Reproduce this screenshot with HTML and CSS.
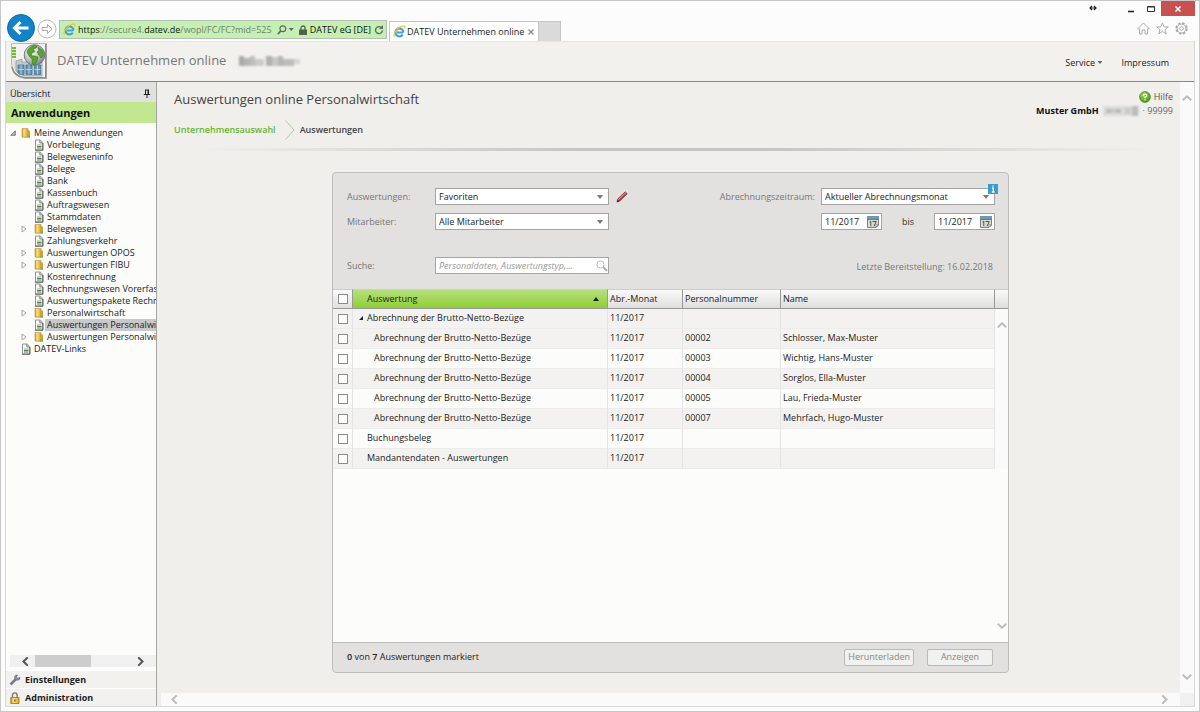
FILE: index.html
```html
<!DOCTYPE html>
<html lang="de">
<head>
<meta charset="utf-8">
<title>DATEV Unternehmen online</title>
<link rel="stylesheet" href="styles.css">
</head>
<body>
<svg class="defs" aria-hidden="true">
  <defs>
    <linearGradient id="gold" x1="0" x2="1"><stop offset="0" stop-color="#b98f22"/><stop offset=".3" stop-color="#fbe083"/><stop offset="1" stop-color="#d9a52a"/></linearGradient>
    <radialGradient id="globe" cx=".35" cy=".3" r=".8"><stop offset="0" stop-color="#ffffff"/><stop offset=".6" stop-color="#b9bdc0"/><stop offset="1" stop-color="#6c7276"/></radialGradient>
    <radialGradient id="green" cx=".4" cy=".3" r=".8"><stop offset="0" stop-color="#a9e04e"/><stop offset="1" stop-color="#3e8a12"/></radialGradient>
    <symbol id="doc" viewBox="0 0 10 12">
      <path d="M1.500 1h4.800L8.500 3.500V11h-7z" fill="#fafafa" stroke="#8e9294"/>
      <path d="M5.800 1v3h3" fill="#cfcfcf" stroke="#77797b" stroke-width=".8"/>
      <path d="M3 6h4.500" stroke="#9aa396"/><path d="M3 7.500h4.500M3 9h4.500" stroke="#55803f" stroke-width="1.200"/>
      <path d="M1 11.200h8V4" fill="none" stroke="#5d6264"/>
    </symbol>
    <symbol id="folder" viewBox="0 0 10 12">
      <path d="M1 1.500h6V10H1z" fill="url(#gold)" stroke="#b8933a" stroke-width=".6"/>
      <path d="M6.500 2.500L9 4v6.500H3L1 10h5.500z" fill="#cda33a"/>
      <path d="M6.500 8.500H9v2H6.500z" fill="#8fa83c"/>
    </symbol>
    <symbol id="ie" viewBox="0 0 12 12">
      <path d="M9.500 6.900H3.600M9.600 7A3.700 3.700 0 1 0 9 8.900" fill="none" stroke="#3fa3de" stroke-width="2"/>
      <path d="M1.400 10.900C-.8 9 4.500 1.600 9.300.9c1.700-.2 2 .8 1.300 2.300" fill="none" stroke="#f0bf2d" stroke-width="1.100"/>
    </symbol>
    <symbol id="cal" viewBox="0 0 12 12">
      <path d="M.5.5h11v8.500l-2.500 2.500H.5z" fill="#d9dcd0" stroke="#7d827f"/>
      <path d="M0 0h12v3.500H0z" fill="#6f98b8"/><path d="M0 3h12v1H0z" fill="#5a7d98"/>
      <path d="M2.500 6l1.300-.8v5M5.500 5.500h3.800L7 10.200" fill="none" stroke="#50554f" stroke-width="1"/>
      <path d="M8.800 11.300V8.800h2.500z" fill="#fff" stroke="#666" stroke-width=".6"/>
    </symbol>
    <symbol id="left" viewBox="0 0 8 8"><path d="M6 .3L2.200 4 6 7.700" fill="none" stroke="currentColor" stroke-width="1.800"/></symbol>
    <symbol id="right" viewBox="0 0 8 8"><path d="M2 .3L5.800 4 2 7.700" fill="none" stroke="currentColor" stroke-width="1.800"/></symbol>
    <symbol id="up" viewBox="0 0 10 8"><path d="M.8 6.200L5 2.200l4.200 4" fill="none" stroke="currentColor" stroke-width="1.900"/></symbol>
    <symbol id="down" viewBox="0 0 10 8"><path d="M.8 1.800L5 5.800l4.200-4" fill="none" stroke="currentColor" stroke-width="1.900"/></symbol>
    <symbol id="closed" viewBox="0 0 6 8"><path d="M1 1l4 3-4 3z" fill="#fff" stroke="#999" stroke-width=".9"/></symbol>
    <symbol id="open" viewBox="0 0 6 6"><path d="M5.300.8v4.500H.8z" fill="#bbb" stroke="#666" stroke-width=".8"/></symbol>
  </defs>
</svg>

<div class="window">
  <header class="chrome">
    <nav class="navbar" aria-label="Browser">
      <button class="back" aria-label="Zurück"><svg viewBox="0 0 28 28"><circle cx="14" cy="14" r="13.500" fill="#1183c6" stroke="#0c6ca6"/><path d="M21.500 14H8M13.500 8L7.500 14l6 6" fill="none" stroke="#fff" stroke-width="3"/></svg></button>
      <button class="forward" aria-label="Vorwärts"><svg viewBox="0 0 20 20"><circle cx="10" cy="10" r="9" fill="#fff" stroke="#b9b9b9"/><path d="M5 8.500h5.500V5.500L15 10l-4.500 4.500v-3H5z" fill="#fff" stroke="#aaa"/></svg></button>
      <div class="address">
        <svg class="ie"><use href="#ie"/></svg>
        <span class="url"><b>https</b>://secure4.<b>datev.de</b>/wopl/FC/FC?mid=525</span>
        <svg class="icon10" viewBox="0 0 12 12"><circle cx="7" cy="4.500" r="3.500" fill="none" stroke="#5d6b58" stroke-width="1.400"/><path d="M4.500 7L1 11" stroke="#5d6b58" stroke-width="2"/></svg>
        <span class="caret"></span>
        <svg class="lock" viewBox="0 0 8 10"><path d="M2 5V3a2 2 0 0 1 4 0v2" fill="none" stroke="#52624d" stroke-width="1.300"/><path d="M0 4.500h8V10H0z" fill="#52624d"/></svg>
        <span class="owner">DATEV eG [DE]</span>
        <svg class="icon10" viewBox="0 0 12 12"><path d="M8.800 3A4.200 4.200 0 1 0 10.200 6.500" fill="none" stroke="#5d6b58" stroke-width="1.600"/><path d="M6 4.800h4.800V0z" fill="#5d6b58"/></svg>
      </div>
      <div class="tab"><svg class="ie"><use href="#ie"/></svg><span>DATEV Unternehmen online</span><button aria-label="Tab schließen"><svg viewBox="0 0 6 6"><path d="M.5.5l5 5m0-5l-5 5" stroke="#888" stroke-width="1.200"/></svg></button></div>
      <button class="newtab" aria-label="Neuer Tab"></button>
    </nav>
    <div class="system">
      <div class="controls">
        <svg class="resize" viewBox="0 0 8 6"><path d="M1 3h6M3 1L1 3l2 2M5 1l2 2-2 2" fill="none" stroke="#222" stroke-width="1.200"/></svg>
        <button aria-label="Minimieren"><svg viewBox="0 0 8 8"><path d="M1 6.500h6" stroke="#222" stroke-width="1.600"/></svg></button>
        <button aria-label="Maximieren"><svg viewBox="0 0 8 8"><path d="M.5 1.500h7v5h-7zM.5 2h7" fill="none" stroke="#333"/></svg></button>
        <button class="close" aria-label="Schließen"><svg viewBox="0 0 8 8"><path d="M1.500 1.500l5 5m0-5l-5 5" stroke="#fff" stroke-width="1.500"/></svg></button>
      </div>
      <div class="tools">
        <button aria-label="Startseite"><svg viewBox="0 0 13 13"><path d="M.8 6.800L6.500 1l5.700 5.800H10.500v5.200H8V8H5v4H2.500V6.800z" fill="#fff" stroke="#aaa"/></svg></button>
        <button aria-label="Favoriten"><svg viewBox="0 0 13 13"><path d="M6.500.9l1.600 4H12.300L9 7.600l1.200 4.300-3.700-2.500-3.700 2.500L4 7.600.7 4.900h4.200z" fill="#fff" stroke="#aaa"/></svg></button>
        <button aria-label="Extras"><svg viewBox="0 0 13 13"><circle cx="6.500" cy="6.500" r="5.400" fill="none" stroke="#aaa" stroke-width="1.600" stroke-dasharray="2.600 1.640"/><circle cx="6.500" cy="6.500" r="4.400" fill="#fff" stroke="#aaa"/><circle cx="6.500" cy="6.500" r="1.800" fill="#fff" stroke="#aaa"/></svg></button>
      </div>
    </div>
  </header>

  <div class="viewport">
    <header class="apphead">
      <svg class="logo" viewBox="0 0 36 36">
        <path d="M.5.500h35v35H14Q1 34 .5 20z" fill="#f1f2f1" stroke="#b5b7b5"/>
        <path d="M34.800 1v33.800H14Q3 33.500 1 24" fill="none" stroke="#8b8e8b" stroke-width="1.600"/>
        <path d="M1 4h4v11H1z" fill="#78b83e"/><path d="M1 6.500h4M1 9.500h4M1 12.500h4" stroke="#d4edbc"/>
        <path d="M1.500 16h3.500v12q-3-4-3.500-8z" fill="#dfe1e1"/>
        <path d="M5 18l6-2v3h20v14H14Q8 32 5 28z" fill="#c4c9cb" stroke="#8c9295" stroke-width=".7"/>
        <path d="M7 22h6v9.500H9L7 30zM15 22h6v9.500h-6zM23.500 22h6v9.500h-6z" fill="#5c97c2" stroke="#47677f" stroke-width=".7"/>
        <path d="M7 26.500h6M15 26.500h6M23.500 26.500h6M10 22v9.500M18 22v9.500M26.500 22v9.500" stroke="#c7ddeb" stroke-width=".8"/>
        <circle cx="23.500" cy="12" r="10.300" fill="url(#globe)" stroke="#73797b"/>
        <path d="M16 9q1-5 7-6.500l3.500.5-1.500 2-3 1.500 2 2-3 1.500-1 2.500 3 .5 4 1-1 4-2.500 4-2-1-.5-5-3-3zM27 4l4 3 1.500 5-2.500 3-2-3-2-3 2-1z" fill="#55a62a" stroke="#317812" stroke-width=".6"/>
      </svg>
      <span class="appname">DATEV Unternehmen online</span>
      <svg class="mosaic-name" viewBox="0 0 62 12" aria-hidden="true"><path d="M0 1h5v10H0z" fill="#aaa"/><path d="M5 3h6v8H5z" fill="#b5b5b4"/><path d="M11 1h5v10h-5z" fill="#bebebd"/><path d="M16 4h9v7h-9z" fill="#cbcbca"/><path d="M27 1h6v10h-6z" fill="#b0b0af"/><path d="M33 2h6v9h-6z" fill="#c7c7c6"/><path d="M39 1h5v10h-5z" fill="#b5b5b4"/><path d="M44 4h11v7H44z" fill="#bcbcbb"/><path d="M55 4h6v5h-6z" fill="#d4d4d3"/></svg>
      <nav class="headnav" aria-label="Service">
        <button>Service <span class="caret"></span></button>
        <a href="#">Impressum</a>
      </nav>
    </header>

    <div class="columns">
      <aside class="sidebar">
        <div class="overview">Übersicht<button aria-label="Anheften"><svg viewBox="0 0 8 9"><path d="M2.500 1v4.500M5.500 1v4.500M2 1h4M.8 5.500h6.400M4 5.500V9" fill="none" stroke="#222"/><path d="M4.500 1h1.500v4.500H4.500z" fill="#222"/></svg></button></div>
        <h2 class="apps">Anwendungen</h2>
        <ul class="tree">
          <li><svg class="twist"><use href="#open"/></svg><svg class="node"><use href="#folder"/></svg><a href="#">Meine Anwendungen</a></li>
          <li class="sub"><svg class="node"><use href="#doc"/></svg><a href="#">Vorbelegung</a></li>
          <li class="sub"><svg class="node"><use href="#doc"/></svg><a href="#">Belegweseninfo</a></li>
          <li class="sub"><svg class="node"><use href="#doc"/></svg><a href="#">Belege</a></li>
          <li class="sub"><svg class="node"><use href="#doc"/></svg><a href="#">Bank</a></li>
          <li class="sub"><svg class="node"><use href="#doc"/></svg><a href="#">Kassenbuch</a></li>
          <li class="sub"><svg class="node"><use href="#doc"/></svg><a href="#">Auftragswesen</a></li>
          <li class="sub"><svg class="node"><use href="#doc"/></svg><a href="#">Stammdaten</a></li>
          <li class="branch"><svg class="twist"><use href="#closed"/></svg><svg class="node"><use href="#folder"/></svg><a href="#">Belegwesen</a></li>
          <li class="sub"><svg class="node"><use href="#doc"/></svg><a href="#">Zahlungsverkehr</a></li>
          <li class="branch"><svg class="twist"><use href="#closed"/></svg><svg class="node"><use href="#folder"/></svg><a href="#">Auswertungen OPOS</a></li>
          <li class="branch"><svg class="twist"><use href="#closed"/></svg><svg class="node"><use href="#folder"/></svg><a href="#">Auswertungen FIBU</a></li>
          <li class="sub"><svg class="node"><use href="#doc"/></svg><a href="#">Kostenrechnung</a></li>
          <li class="sub"><svg class="node"><use href="#doc"/></svg><a href="#">Rechnungswesen Vorerfass</a></li>
          <li class="sub"><svg class="node"><use href="#doc"/></svg><a href="#">Auswertungspakete Rechnu</a></li>
          <li class="branch"><svg class="twist"><use href="#closed"/></svg><svg class="node"><use href="#folder"/></svg><a href="#">Personalwirtschaft</a></li>
          <li class="sub current"><svg class="node"><use href="#doc"/></svg><a href="#">Auswertungen Personalwirt</a></li>
          <li class="branch"><svg class="twist"><use href="#closed"/></svg><svg class="node"><use href="#folder"/></svg><a href="#">Auswertungen Personalwirt</a></li>
          <li class="root"><svg class="node"><use href="#doc"/></svg><a href="#">DATEV-Links</a></li>
        </ul>
        <div class="treescroll"><svg class="arrow"><use href="#left"/></svg><span class="thumb"></span><svg class="arrow"><use href="#right"/></svg></div>
        <a class="sidelink" href="#"><svg viewBox="0 0 12 12"><path d="M1.500 10.500l5-5" stroke="#777c98" stroke-width="2.600"/><path d="M10.800 3.200A2.600 2.600 0 1 1 8.500 1L7.300 3l1.600 1.500z" fill="#8f95b0" stroke="#5f6480" stroke-width=".8"/></svg>Einstellungen</a>
        <a class="sidelink" href="#"><svg viewBox="0 0 12 12"><path d="M3.500 5.500V3.200a2.300 2.300 0 0 1 4.600 0v2.300" fill="none" stroke="#777" stroke-width="1.400"/><path d="M1.800 5.500h8.200v6H1.800z" fill="url(#gold)" stroke="#96731b" stroke-width=".8"/><path d="M5.900 7.500v2" stroke="#6b5010" stroke-width="1.200"/></svg>Administration</a>
      </aside>

      <div class="frame">
        <main class="page">
          <div class="pagetop">
            <div>
              <h1>Auswertungen online Personalwirtschaft</h1>
              <nav class="crumbs" aria-label="Pfad"><a href="#">Unternehmensauswahl</a><svg viewBox="0 0 10 20"><path d="M.5.5L9 10 .5 19.500" fill="none" stroke="#a3d48c"/></svg><span>Auswertungen</span></nav>
            </div>
            <div class="account">
              <a class="help" href="#"><svg viewBox="0 0 12 12"><circle cx="6" cy="6" r="5.400" fill="url(#green)" stroke="#397c18" stroke-width=".7"/><path d="M4.200 4.800q0-1.600 1.800-1.600t1.800 1.400Q7.800 5.600 6 6.200v1.100M6 8.200v1.200" fill="none" stroke="#fff" stroke-width="1.200"/></svg>Hilfe</a>
              <div class="client"><b>Muster GmbH</b><svg viewBox="0 0 36 12" aria-hidden="true"><path d="M0 1h36v10H0z" fill="#dcdcdb"/><path d="M3 4h5v4H3zM13 4h5v4h-5z" fill="#b9b9b8"/><path d="M8 4h5v4H8zM22 3h5v6h-5z" fill="#c9c9c8"/><path d="M29 1h6v10h-6z" fill="#bcbcbb"/></svg><span>· 99999</span></div>
            </div>
          </div>
          <div class="rule"></div>

          <section class="panel">
            <form class="filters">
              <div class="fields">
                <label for="report">Auswertungen:</label>
                <div class="edit"><span class="drop"><select id="report"><option>Favoriten</option></select></span><button type="button" aria-label="Bearbeiten"><svg viewBox="0 0 12 12"><path d="M1 11l1-3.300L9.200.8l2 1.900L4 9.900z" fill="#b4474b" stroke="#762b2f" stroke-width=".7"/><path d="M2.500 8.500L9.800 1.500" stroke="#e0999a"/><path d="M.7 11.300l.9-2.800 1.800 1.800z" fill="#334"/></svg></button></div>
                <label for="staff">Mitarbeiter:</label>
                <span class="drop"><select id="staff"><option>Alle Mitarbeiter</option></select></span>
                <label class="late" for="search">Suche:</label>
                <span class="search late"><input id="search" type="text" placeholder="Personaldaten, Auswertungstyp,..."><svg viewBox="0 0 12 12"><circle cx="4.500" cy="4.500" r="3.600" fill="#fff" stroke="#bbb"/><path d="M7.200 7.200L11 11" stroke="#aaa" stroke-width="1.800"/></svg></span>
              </div>
              <div class="period">
                <label for="period">Abrechnungszeitraum:</label>
                <span class="drop"><select id="period"><option>Aktueller Abrechnungsmonat</option></select><span class="info"><svg viewBox="0 0 10 10"><path d="M0 0h10v10H0z" fill="#3a9bd0"/><path d="M5 1.500v1.300M4 4.200h1.300v3.600M3.800 8h2.800" fill="none" stroke="#fff" stroke-width="1.300"/></svg></span></span>
                <div class="range">
                  <span class="date"><input type="text" aria-label="Von" value="11/2017"><svg><use href="#cal"/></svg></span>
                  <span>bis</span>
                  <span class="date"><input type="text" aria-label="Bis" value="11/2017"><svg><use href="#cal"/></svg></span>
                </div>
                <p class="updated">Letzte Bereitstellung: 16.02.2018</p>
              </div>
            </form>
            <div class="results">
              <table>
                <colgroup><col class="c-check"><col><col class="c-month"><col class="c-number"><col class="c-name"><col class="c-end"></colgroup>
                <thead><tr><th><input type="checkbox" aria-label="Alle markieren"></th><th class="sorted">Auswertung<span class="sort"></span></th><th>Abr.-Monat</th><th>Personalnummer</th><th>Name</th><th></th></tr></thead>
                <tbody>
                  <tr class="odd"><td><input type="checkbox" aria-label="Gruppe markieren"></td><td class="group"><span class="expanded"></span>Abrechnung der Brutto-Netto-Bezüge</td><td>11/2017</td><td></td><td></td><td></td></tr>
                  <tr class="odd"><td><input type="checkbox" aria-label="00002 markieren"></td><td class="child">Abrechnung der Brutto-Netto-Bezüge</td><td>11/2017</td><td>00002</td><td>Schlosser, Max-Muster</td><td></td></tr>
                  <tr><td><input type="checkbox" aria-label="00003 markieren"></td><td class="child">Abrechnung der Brutto-Netto-Bezüge</td><td>11/2017</td><td>00003</td><td>Wichtig, Hans-Muster</td><td></td></tr>
                  <tr class="odd"><td><input type="checkbox" aria-label="00004 markieren"></td><td class="child">Abrechnung der Brutto-Netto-Bezüge</td><td>11/2017</td><td>00004</td><td>Sorglos, Ella-Muster</td><td></td></tr>
                  <tr><td><input type="checkbox" aria-label="00005 markieren"></td><td class="child">Abrechnung der Brutto-Netto-Bezüge</td><td>11/2017</td><td>00005</td><td>Lau, Frieda-Muster</td><td></td></tr>
                  <tr class="odd"><td><input type="checkbox" aria-label="00007 markieren"></td><td class="child">Abrechnung der Brutto-Netto-Bezüge</td><td>11/2017</td><td>00007</td><td>Mehrfach, Hugo-Muster</td><td></td></tr>
                  <tr><td><input type="checkbox" aria-label="Buchungsbeleg markieren"></td><td class="group">Buchungsbeleg</td><td>11/2017</td><td></td><td></td><td></td></tr>
                  <tr class="odd"><td><input type="checkbox" aria-label="Mandantendaten markieren"></td><td class="group">Mandantendaten - Auswertungen</td><td>11/2017</td><td></td><td></td><td></td></tr>
                </tbody>
              </table>
              <div class="listscroll"><svg class="varrow"><use href="#up"/></svg><svg class="varrow"><use href="#down"/></svg></div>
            </div>
            <footer class="actions">
              <span><b>0</b> von <b>7</b> Auswertungen markiert</span>
              <div class="buttons"><button disabled>Herunterladen</button><button disabled>Anzeigen</button></div>
            </footer>
          </section>
        </main>
        <div class="vscroll"><svg class="varrow"><use href="#up"/></svg><svg class="varrow"><use href="#down"/></svg></div>
        <div class="hscroll"><svg class="arrow"><use href="#left"/></svg><svg class="arrow"><use href="#right"/></svg></div>
        <div class="corner"></div>
      </div>
    </div>
  </div>
</div>
</body>
</html>
```
FILE: styles.css
```css
* { box-sizing: border-box; }
body { margin: 0; font: 9px/12px "Open Sans", "Noto Sans", sans-serif; color: #222; }
button, input, select { font: inherit; color: inherit; margin: 0; padding: 0; border: 0; background: none; border-radius: 0; }
button svg { display: block; width: 100%; height: 100%; }
a { color: inherit; text-decoration: none; }
svg { flex: none; }
b { font-weight: 600; }
.defs { position: absolute; width: 0; height: 0; }

.window { display: flex; flex-direction: column; height: 100vh; min-height: 480px; padding: 0 4px 4px; border: 1px solid #c8c8c8; background: #fcfcfc; }

/* Browser frame */
.chrome { display: flex; justify-content: space-between; height: 40px; }
.navbar { display: flex; align-items: flex-end; padding-left: 2px; }
.back { width: 28px; height: 28px; margin-bottom: -1px; z-index: 1; }
.forward { width: 20px; height: 20px; margin: 0 2px 2px; }
.address { display: flex; align-items: center; width: 328px; height: 19px; margin-bottom: 2px; padding: 0 2px; border: 1px solid #b4bfb0; background: #c5f0b3; }
.ie { width: 13px; height: 13px; margin: 0 2px 0 1px; }
.url { flex: none; margin-right: auto; color: #6f8168; white-space: nowrap; }
.url b { font-weight: 400; color: #111; }
.icon10 { width: 10px; height: 10px; }
.caret { display: inline-block; flex: none; width: 5px; height: 3px; background: #666; clip-path: polygon(0 0, 100% 0, 50% 100%); }
.address .caret { margin: 0 5px 0 2px; }
.lock { width: 8px; height: 10px; margin-right: 3px; }
.owner { margin-right: 3px; color: #111; white-space: nowrap; }
.tab { display: flex; align-items: center; width: 150px; height: 20px; margin-left: 2px; padding-left: 3px; border: 1px solid #c6c6c6; border-bottom: 0; background: #fff; color: #222; white-space: nowrap; }
.tab .ie { margin: 0 1px 0 0; }
.tab button { width: 6px; height: 6px; margin: 0 4px 0 auto; }
.newtab { width: 22px; height: 20px; border: 1px solid #c6c6c6; border-width: 1px 1px 0 0; background: #dadada; }
.system { display: flex; flex-direction: column; align-items: flex-end; }
.controls { display: flex; }
.controls button { width: 20px; height: 15px; padding: 3px 6px; }
.controls svg { width: 8px; height: 8px; margin-top: 1px; }
.controls .resize { margin: 3px 24px 0 0; }
.controls .close { width: 34px; height: 15px; padding: 3px 13px; background: #c75050; }
.tools { display: flex; gap: 6px; padding: 6px 7px 0 0; }
.tools button { width: 13px; height: 13px; }

/* Application header */
.viewport { display: flex; flex: 1; flex-direction: column; min-height: 0; border: 1px solid #d8d8d8; border-top-color: #e6e6e6; }
.apphead { display: flex; flex: none; align-items: center; height: 40px; padding: 0 25px 1px 5px; border-bottom: 1px solid #868a86; background: #f2f1ee; }
.logo { width: 36px; height: 36px; }
.appname { margin: 0 13px 2px 10px; font-size: 13px; line-height: 18px; color: #777; }
.mosaic-name { width: 62px; height: 12px; filter: blur(1px); }
.headnav { display: flex; gap: 19px; margin: 4px 0 0 auto; }
.headnav .caret { margin-bottom: 2px; }
.columns { display: grid; flex: 1; grid-template-columns: 151px minmax(0, 1fr); min-height: 0; }

/* Navigation */
.sidebar { display: flex; flex-direction: column; min-height: 0; overflow: hidden; border-right: 1px solid #a3a6a3; background: #fcfcfb; }
.overview { display: flex; align-items: center; justify-content: space-between; height: 20px; padding: 3px 5px 0 4px; background: #e1e1e1; }
.overview button { width: 8px; height: 9px; }
.apps { margin: 0; padding: 3px 5px; background: #c1e78f; font-size: 11px; line-height: 15px; font-weight: 700; color: #111; }
.tree { flex: 1; margin: 0; padding: 4px 0 0; overflow: hidden; list-style: none; white-space: nowrap; }
.tree li { display: flex; align-items: center; height: 12px; padding-left: 4px; }
.tree .sub { padding-left: 28px; }
.tree .branch { padding-left: 15px; }
.tree .root { padding-left: 15px; }
.tree a { padding: 0 2px; line-height: 12px; }
.tree .current a { flex: 1; background: #c9c9c9; }
.twist { width: 6px; height: 8px; margin-right: 7px; }
.node { width: 10px; height: 12px; margin-right: 1px; }
.tree li:first-child .twist { height: 6px; margin-right: 5px; }
.treescroll { display: flex; align-items: center; height: 12px; margin: 0 0 3px 4px; padding: 0 11px; background: #f0f0f0; color: #555; }
.arrow { width: 9px; height: 9px; }
.thumb { width: 56px; height: 12px; margin: 0 auto 0 5px; background: #cdcdcd; }
.sidelink { display: flex; align-items: center; gap: 4px; height: 18px; padding-left: 3px; border-top: 1px solid #fff; background: #f2f1ee; font-weight: 700; color: #222; }
.sidelink svg { width: 12px; height: 12px; }

/* Content frame */
.frame { display: grid; grid-template: minmax(0, 1fr) 13px / minmax(0, 1fr) 14px; min-height: 0; background: #f0efec; }
.page { display: flex; flex-direction: column; padding: 8px 7px 20px 11px; overflow: hidden; }
.vscroll { display: flex; flex-direction: column; align-items: center; justify-content: space-between; padding: 12px 0; background: #fafafa; color: #bbb; }
.hscroll { display: flex; align-items: center; justify-content: space-between; margin-left: 4px; padding: 0 11px 0 9px; background: #fafafa; color: #bbb; }
.corner { background: #f0f0f0; }
.varrow { width: 10px; height: 8px; }
.pagetop { display: flex; justify-content: space-between; padding-left: 6px; }
h1 { margin: 0; font-size: 13px; line-height: 18px; font-weight: 400; color: #444; }
.crumbs { display: flex; align-items: center; height: 20px; margin-top: 12px; font-weight: 600; color: #444; }
.crumbs a { color: #68b52f; }
.crumbs svg { width: 10px; height: 20px; margin: 0 5px 0 9px; }
.account { display: flex; flex-direction: column; align-items: flex-end; gap: 2px; padding-top: 1px; }
.help { display: flex; align-items: center; gap: 3px; color: #555; }
.help svg { width: 12px; height: 12px; }
.client { display: flex; align-items: center; gap: 4px; }
.client b { font-weight: 700; color: #111; }
.client span { color: #666; }
.client svg { width: 36px; height: 12px; filter: blur(1px); }
.rule { flex: none; height: 3px; margin: 8px 23px 21px 29px; background: linear-gradient(90deg, transparent, #c5c5c3 40%, #c5c5c3 60%, transparent); }

/* Report panel */
.panel { display: flex; flex: 1; flex-direction: column; width: 100%; max-width: 677px; min-height: 0; margin: 0 auto; border: 1px solid #bdbdbb; border-radius: 4px; background: #e2e1e0; overflow: hidden; }
.filters { display: flex; flex: none; justify-content: space-between; height: 116px; padding: 15px 13px 0 14px; color: #777; }
.fields { display: grid; grid-template-columns: 80px 174px; gap: 8px; align-content: start; align-items: center; }
.drop, .search, .date { display: flex; position: relative; align-items: center; width: 174px; height: 17px; border: 1px solid #a5a5a5; background: #fff; }
.drop select { width: 100%; height: 15px; padding: 0 3px; appearance: none; color: #222; }
.drop::after { content: ""; position: absolute; top: 6px; right: 5px; width: 6px; height: 4px; background: #777; clip-path: polygon(0 0, 100% 0, 50% 100%); pointer-events: none; }
.edit { display: flex; align-items: center; gap: 7px; }
.edit .drop { flex: none; }
.edit button { width: 12px; height: 12px; flex: none; }
.fields .late { margin-top: 19px; }
.search input { width: 100%; padding: 0 3px; font-style: italic; }
.search input::placeholder { color: #999; opacity: 1; }
.search svg { width: 12px; height: 12px; }
.period { display: grid; grid-template-columns: auto 174px; gap: 8px 6px; align-content: start; align-items: center; }
.info { position: absolute; top: -5px; right: -4px; width: 10px; height: 10px; z-index: 1; }
.info svg { display: block; width: 10px; height: 10px; }
.range { display: flex; grid-column: 2; align-items: center; justify-content: space-between; color: #333; }
.date { width: 61px; padding-right: 2px; }
.date input { width: 100%; min-width: 0; padding-left: 3px; color: #222; }
.date svg { width: 12px; height: 12px; }
.updated { grid-column: 1 / 3; margin: 23px 2px 0 0; text-align: right; }

/* Result list */
.results { display: flex; position: relative; flex: 1; min-height: 0; background: #fcfcfb; }
table { width: 100%; align-self: flex-start; table-layout: fixed; border-collapse: separate; border-spacing: 0; }
.c-check { width: 20px; }
.c-month { width: 75px; }
.c-number { width: 98px; }
.c-name { width: 214px; }
.c-end { width: 13px; }
th, td { height: 20px; padding: 0 2px; text-align: left; white-space: nowrap; border-right: 1px solid #e4e4e3; border-bottom: 1px solid #ececea; }
td { padding-bottom: 2px; }
th { border: 1px solid #999; border-width: 1px 1px 1px 0; border-top-color: #ccc; background: linear-gradient(#fafafa, #dededd); font-weight: 400; color: #222; }
th:last-child { border-right: 0; }
td:last-child { border: 0; background: #fafafa; }
th:first-child, td:first-child { padding: 0 0 0 5px; }
.odd { background: #f3f2f0; }
.sorted { padding: 0 8px 0 14px; background: linear-gradient(#b5e07c, #8fcf34); }
.sort { float: right; width: 6px; height: 4px; margin-top: 4px; background: #222; clip-path: polygon(50% 0, 100% 100%, 0 100%); }
.group { position: relative; padding-left: 14px; }
.child { padding-left: 21px; }
.expanded { position: absolute; top: 7px; left: 6px; width: 4px; height: 4px; background: #222; clip-path: polygon(100% 0, 100% 100%, 0 100%); }
input[type="checkbox"] { display: block; width: 10px; height: 10px; appearance: none; border: 1px solid #8b8b8b; background: #fff; }
.listscroll { display: flex; position: absolute; top: 20px; right: 0; bottom: 0; width: 13px; flex-direction: column; align-items: center; justify-content: space-between; padding: 12px 0; color: #bbb; }
.actions { display: flex; flex: none; align-items: center; justify-content: space-between; height: 30px; padding: 0 15px 1px 14px; border-top: 1px solid #bdbdbb; color: #222; }
.buttons { display: flex; gap: 13px; }
.buttons button { min-width: 66px; height: 17px; padding: 0 3px; border: 1px solid #b9b9b8; border-radius: 2px; background: #f1f1f0; color: #888; }
```
